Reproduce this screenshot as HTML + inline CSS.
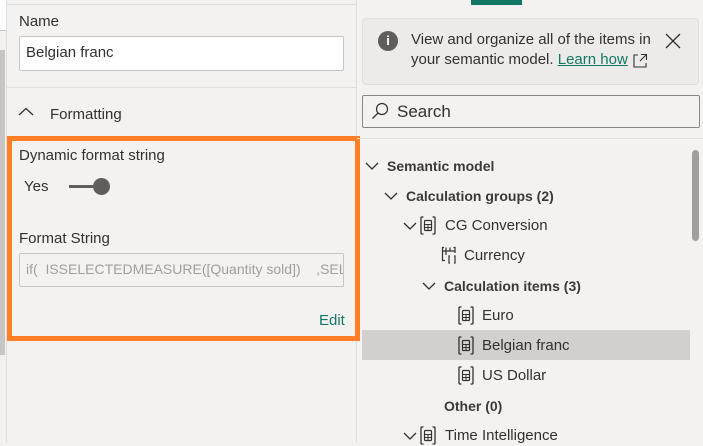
<!DOCTYPE html><html><head><style>
*{margin:0;padding:0;box-sizing:border-box}
body{width:703px;height:443px;overflow:hidden;background:#f3f2f1;font-family:"Segoe UI","Liberation Sans",sans-serif;color:#323130;position:relative;font-size:14px}
.a{position:absolute;white-space:nowrap}
.t{position:absolute;white-space:nowrap;font-size:15px;line-height:20px}
.sb{font-weight:bold;font-size:14px;color:#3b3a39}
</style></head><body>
<div class="a" style="left:0;top:0;width:6px;height:30px;background:#fff"></div>
<div class="a" style="left:0;top:30px;width:6px;height:1px;background:#c8c6c4"></div>
<div class="a" style="left:0;top:50px;width:5px;height:305px;background:#c8c6c4"></div>
<div class="a" style="left:6px;top:0;width:1px;height:443px;background:#e1dfdd"></div>
<div class="a" style="left:7px;top:4px;width:349px;height:1px;background:#e1dfdd"></div>
<div class="a" style="left:356px;top:0;width:1px;height:443px;background:#e1dfdd"></div>
<div class="a" style="left:19px;top:13px;font-size:15px">Name</div>
<div class="a" style="left:19px;top:36px;width:325px;height:35px;background:#fff;border:1px solid #c8c6c4;border-radius:2px;padding:7px 6px;font-size:15px">Belgian franc</div>
<div class="a" style="left:7px;top:87px;width:349px;height:1px;background:#e1dfdd"></div>
<svg class="a" style="left:18px;top:107px" width="16" height="10"><path d="M1 8L8 1.5L15 8" fill="none" stroke="#323130" stroke-width="1.3"/></svg>
<div class="a" style="left:50px;top:106px;font-size:15px">Formatting</div>
<div class="a" style="left:7px;top:136px;width:353px;height:205px;border:5px solid #ff7f27"></div>
<div class="a" style="left:19px;top:147px;font-size:15px">Dynamic format string</div>
<div class="a" style="left:24px;top:178px;font-size:15px">Yes</div>
<div class="a" style="left:69px;top:185px;width:28px;height:3px;background:#605e5c"></div>
<div class="a" style="left:93px;top:178px;width:17px;height:17px;border-radius:50%;background:#605e5c"></div>
<div class="a" style="left:19px;top:230px;font-size:15px">Format String</div>
<div class="a" style="left:19px;top:253px;width:325px;height:34px;border:1px solid #c8c6c4;border-radius:2px;padding:7px 6px;font-size:14px;color:#a19f9d;overflow:hidden">if(&nbsp; ISSELECTEDMEASURE([Quantity sold])&nbsp;&nbsp;&nbsp; ,SEL</div>
<div class="a" style="left:319px;top:312px;font-size:15px;color:#117865">Edit</div>

<div class="a" style="left:471px;top:0;width:51px;height:5px;background:#117865"></div>
<div class="a" style="left:362px;top:18px;width:337px;height:67px;background:#edebe9;border:1px solid #e1dfdd;border-radius:4px"></div>
<div class="a" style="left:378px;top:31px;width:20px;height:20px;border-radius:50%;background:#605e5c;color:#fff;font-size:13px;font-weight:bold;text-align:center;line-height:20px">i</div>
<div class="a" style="left:411px;top:30px;font-size:15px;line-height:20px">View and organize all of the items in<br>your semantic model. <span style="color:#117865;text-decoration:underline">Learn how </span></div>
<svg class="a" style="left:632px;top:53px" width="16" height="16"><path d="M6 2H2v12h12v-4M9 1.5h5.5V7M14.5 1.5L8 8" fill="none" stroke="#323130" stroke-width="1.1"/></svg>
<svg class="a" style="left:665px;top:33px" width="16" height="16"><path d="M1 1L15 15M15 1L1 15" stroke="#323130" stroke-width="1.3"/></svg>
<div class="a" style="left:362px;top:95px;width:338px;height:33px;border:1px solid #8a8886;border-radius:2px"></div>
<svg class="a" style="left:371px;top:102px" width="18" height="18"><circle cx="11" cy="7" r="5.5" fill="none" stroke="#323130" stroke-width="1.2"/><path d="M7 11L1.5 16.5" stroke="#323130" stroke-width="1.3"/></svg>
<div class="a" style="left:397px;top:102px;font-size:17px">Search</div>
<div class="a" style="left:357px;top:138px;width:346px;height:1px;background:#e1dfdd"></div>
<div class="a" style="left:692px;top:150px;width:7px;height:91px;border-radius:4px;background:#a19f9d"></div>
<div class="a" style="left:362px;top:330px;width:328px;height:30px;background:#d2d0ce"></div>

<svg width="0" height="0" style="position:absolute"><defs>
<g id="chev"><path d="M1 1L7 7L13 1" fill="none" stroke="#323130" stroke-width="1.3"/></g>
<g id="calc"><path d="M3.5 1H1.5Q1 1 1 2V17Q1 18 2 18H3.5M12.5 1H14.5Q15 1 15 2V17Q15 18 14 18H12.5" fill="none" stroke="#323130" stroke-width="1.3"/><rect x="4.5" y="4.5" width="7" height="10" rx="1" fill="none" stroke="#323130" stroke-width="1.2"/><path d="M5 8.5h6M5 11.5h6M8 8.5v6" stroke="#323130" stroke-width="1"/></g>
</defs></svg>
<svg class="a" style="left:365px;top:162px" width="14" height="9"><use href="#chev"/></svg>
<div class="t sb" style="left:387px;top:156px">Semantic model</div>
<svg class="a" style="left:384px;top:192px" width="14" height="9"><use href="#chev"/></svg>
<div class="t sb" style="left:406px;top:186px">Calculation groups (2)</div>
<svg class="a" style="left:403px;top:222px" width="14" height="9"><use href="#chev"/></svg>
<svg class="a" style="left:420px;top:216px" width="16" height="19"><use href="#calc"/></svg>
<div class="t" style="left:445px;top:216px">CG Conversion</div>
<svg class="a" style="left:441px;top:246px" width="17" height="19"><path d="M3 1.5H1.5V14.5H4M1.5 5H14M5 1.5V9M9 1.5V5M12.5 1.5H14V7" fill="none" stroke="#323130" stroke-width="1.2"/><path d="M9 10H8v7h1M13 10h1v7h-1" fill="none" stroke="#323130" stroke-width="1.2"/></svg>
<div class="t" style="left:464px;top:246px">Currency</div>
<svg class="a" style="left:422px;top:282px" width="14" height="9"><use href="#chev"/></svg>
<div class="t sb" style="left:444px;top:276px">Calculation items (3)</div>
<svg class="a" style="left:458px;top:306px" width="16" height="19"><use href="#calc"/></svg>
<div class="t" style="left:482px;top:306px">Euro</div>
<svg class="a" style="left:458px;top:336px" width="16" height="19"><use href="#calc"/></svg>
<div class="t" style="left:482px;top:336px">Belgian franc</div>
<svg class="a" style="left:458px;top:366px" width="16" height="19"><use href="#calc"/></svg>
<div class="t" style="left:482px;top:366px">US Dollar</div>
<div class="t sb" style="left:444px;top:396px">Other (0)</div>
<svg class="a" style="left:403px;top:432px" width="14" height="9"><use href="#chev"/></svg>
<svg class="a" style="left:420px;top:426px" width="16" height="19"><use href="#calc"/></svg>
<div class="t" style="left:445px;top:426px">Time Intelligence</div>
</body></html>
